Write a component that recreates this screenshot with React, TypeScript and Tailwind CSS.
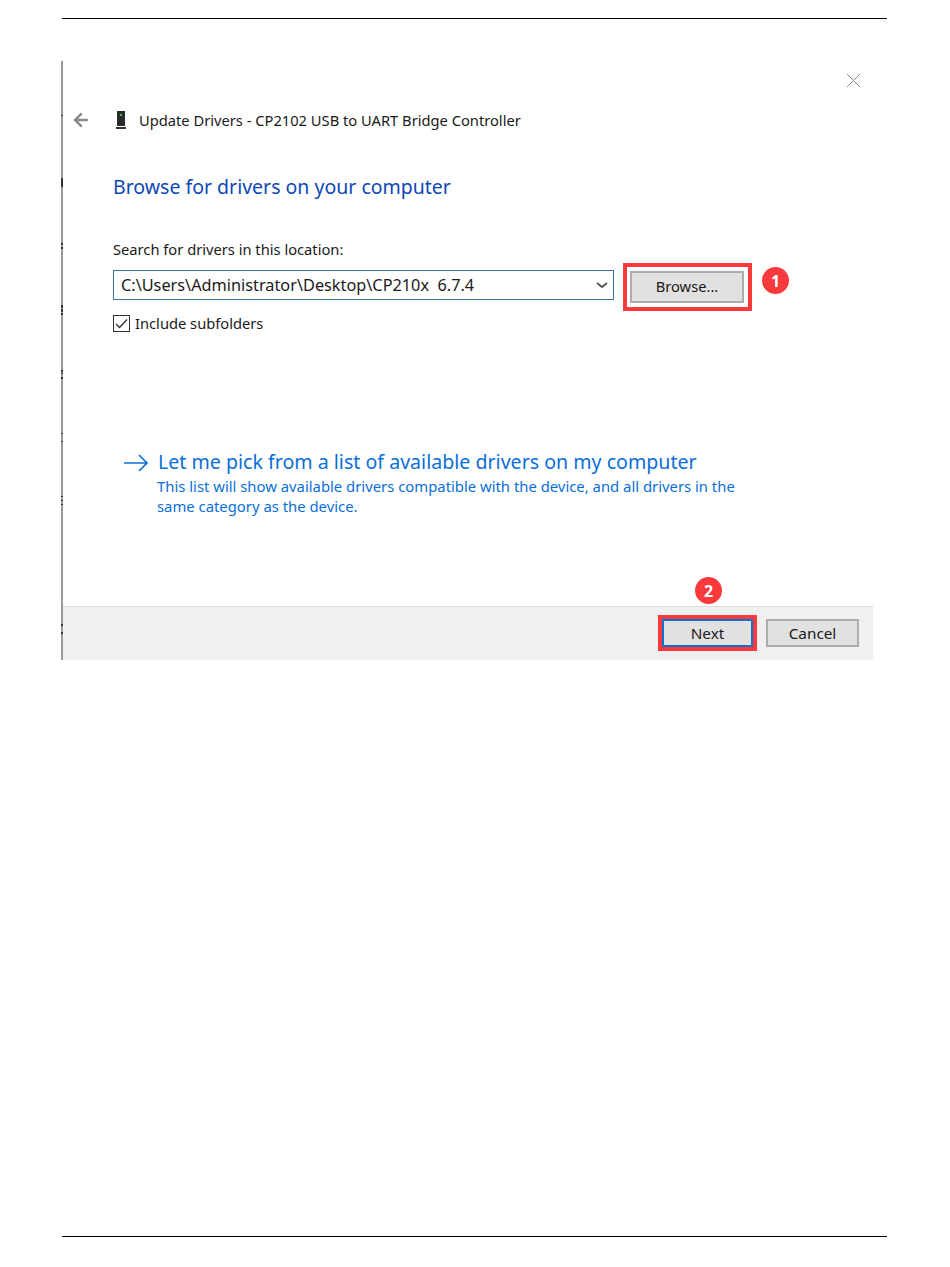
import { ArrowLeft } from 'lucide-react'

// dark specks on the left edge of the pasted screenshot, [top, height] in dialog coords
const edgeTicks = [
  [54, 1], [117, 9], [182, 2], [186, 2], [244, 3], [248, 3], [252, 2],
  [309, 2], [312, 1], [316, 2], [372, 1], [380, 1], [435, 1], [439, 1], [443, 1],
  [563, 2], [571, 2],
]

function DeviceIcon() {
  return (
    <svg width="12" height="19" viewBox="0 0 12 19" className="block">
      <rect x="2" y="0" width="8" height="15" fill="#2b2b2b" />
      <rect x="5" y="3" width="2" height="2" fill="#35c94a" />
      <rect x="1" y="16" width="10" height="2" fill="#333333" />
    </svg>
  )
}

function StepBadge({ n, className }: { n: number; className: string }) {
  return (
    <span className={`absolute flex h-[27px] w-[27px] items-center justify-center rounded-full bg-[#f93a3d] text-[16px] font-bold leading-none text-white ${className}`}>
      {n}
    </span>
  )
}

export default function App() {
  return (
    <div className="flex h-[1267px] w-[950px] flex-col bg-white pl-[61px] pr-[63px] pt-[18px] font-['Noto_Sans',sans-serif] text-[#1a1a1a]">
      <div className="ml-px h-px bg-black" />

      {/* dialog screenshot */}
      <div className="relative mt-[42px] flex h-[599px] w-[812px] flex-col border-l-2 border-[#9a9a9a]">
        {edgeTicks.map(([top, height]) => (
          <span
            key={top}
            className="absolute left-[-2px] w-[2px] bg-[#333333]"
            style={{ top, height }}
          />
        ))}

        <div className="relative flex-1">
          <svg width="15" height="15" viewBox="0 0 15 15" className="absolute left-[783px] top-[12px]">
            <path d="M1 1l13 13M14 1L1 14" stroke="#8a8a8a" strokeWidth="1" fill="none" />
          </svg>

          {/* title row */}
          <div className="mt-[49px] flex h-[20px] items-center">
            <ArrowLeft size={20} strokeWidth={3} className="ml-[8px] text-[#8a8a8a]" />
            <span className="ml-[24px]"><DeviceIcon /></span>
            <span className="ml-[12px] text-[14.7px] leading-[20px]">Update Drivers - CP2102 USB to UART Bridge Controller</span>
          </div>

          <div className="ml-[50px]">
            <h1 className="mt-[43px] text-[19.5px] font-normal leading-[28px] text-[#0d47b5]">Browse for drivers on your computer</h1>
            <p className="mt-[38px] text-[14.7px] leading-[20px]">Search for drivers in this location:</p>

            <div className="mt-[11px] flex items-center">
              <div className="flex h-[30px] w-[501px] items-center justify-between border border-[#3f74a6] pl-[7px] pr-[5px] text-[16.3px]">
                <span className="leading-[20px]">C:\Users\Administrator\Desktop\CP210x{'\u00a0\u00a0'}6.7.4</span>
                <svg width="12" height="8" viewBox="0 0 12 8">
                  <path d="M1 2l5 4 5-4" stroke="#555555" strokeWidth="1.8" fill="none" />
                </svg>
              </div>
              <div className="relative ml-[9px] mb-[-11px] mt-[-7px] flex h-[48px] w-[129px] items-center border-4 border-[#f93a3d] pl-[3px]">
                <div className="flex h-[32px] w-[114px] items-center justify-center border-2 border-[#adadad] bg-[#e1e1e1] pb-px text-[14.7px]">Browse...</div>
                <StepBadge n={1} className="left-[135px] top-0" />
              </div>
            </div>

            <label className="mt-[13px] flex items-center">
              <span className="flex h-[17px] w-[17px] items-center justify-center border border-[#333333]">
                <svg width="13" height="11" viewBox="0 0 13 11">
                  <path d="M1 6l3.5 3.5L12 1.5" stroke="#333333" strokeWidth="1.3" fill="none" />
                </svg>
              </span>
              <span className="ml-[5px] text-[14.7px] leading-[20px]">Include subfolders</span>
            </label>
          </div>

          {/* command link */}
          <div className="ml-[60px] mt-[114px] flex items-start text-[#0a6fd8]">
            <svg width="26" height="20" viewBox="0 0 26 20" className="mt-[6px] shrink-0">
              <path d="M1 10h23M16 2l8 8-8 8" stroke="#0a6fd8" strokeWidth="1.7" fill="none" />
            </svg>
            <div className="ml-[9px]">
              <p className="text-[19.6px] leading-[29px]">Let me pick from a list of available drivers on my computer</p>
              <p className="ml-[-1px] w-[600px] text-[14.85px] leading-[20px]">
                This list will show available drivers compatible with the device, and all drivers in the same category as the device.
              </p>
            </div>
          </div>
        </div>

        {/* footer */}
        <div className="relative flex h-[54px] items-start border-t border-[#dcdcdc] bg-[#f0f0f0] pl-[595px] pt-[8px]">
          <StepBadge n={2} className="left-[632px] top-[-30px]" />
          <div className="flex h-[36px] w-[99px] items-center justify-center border-4 border-[#f93a3d]">
            <div className="flex h-[28px] w-[91px] items-center justify-center border-2 border-[#0a72d0] bg-[#e1e1e1] text-[15.3px]">Next</div>
          </div>
          <div className="ml-[9px] mt-[4px] flex h-[28px] w-[93px] items-center justify-center border-2 border-[#adadad] bg-[#e1e1e1] text-[15.3px]">Cancel</div>
        </div>
      </div>

      <div className="ml-px mt-[576px] h-px bg-black" />
    </div>
  )
}
